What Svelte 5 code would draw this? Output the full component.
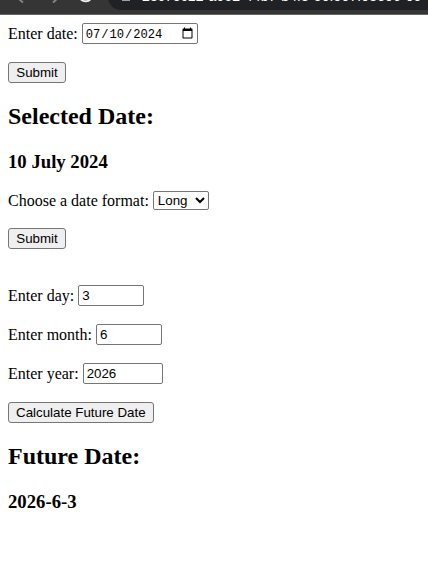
<script>
  let date = $state('2024-07-10');
  let format = $state('Long');
  let day = $state(3);
  let month = $state(6);
  let year = $state(2026);
</script>

<div class="toolbar">
  <svg class="nav" width="104" height="14" viewBox="0 0 104 14" fill="none" stroke-width="1.8">
    <path d="M26-3L19-1L23 2.5M52-3L57-1L53 2.5" stroke="#858789" />
    <path d="M80-2A6 5 0 0 0 91-1.5" stroke="#f1f1f1" stroke-width="2" />
  </svg>
  <div class="address">
    <svg width="10" height="4" viewBox="0 0 10 4"><path d="M1 0H9V1H1Z" fill="#9aa0a6" /></svg>
    <span>28c7ec12-a662-44b7-b4f8-50f507f08e06-00</span>
  </div>
</div>

<main>
  <form onsubmit={(e) => e.preventDefault()}>
    <div class="row date-row"><label for="date">Enter date:</label><input id="date" type="date" bind:value={date} /></div>
    <button>Submit</button>
  </form>
  <h2>Selected Date:</h2>
  <h3>10 July 2024</h3>
  <form class="format" onsubmit={(e) => e.preventDefault()}>
    <div class="row"><label for="format">Choose a date format:</label><select id="format" bind:value={format}><option>Long</option></select></div>
    <button>Submit</button>
  </form>
  <form class="future" onsubmit={(e) => e.preventDefault()}>
    <div class="row"><label for="day">Enter day:</label><input id="day" type="number" bind:value={day} /></div>
    <div class="row"><label for="month">Enter month:</label><input id="month" type="number" bind:value={month} /></div>
    <div class="row"><label for="year">Enter year:</label><input id="year" class="year" type="number" bind:value={year} /></div>
    <button>Calculate Future Date</button>
  </form>
  <h2>Future Date:</h2>
  <h3>2026-6-3</h3>
</main>

<style>
  :global(body) { margin: 0; background: #fff; overflow: hidden; }
  .toolbar {
    display: flex; height: 14px; overflow: hidden;
    background: #353535; border-bottom: 1px solid #656565;
  }
  .nav { flex: none; }
  .address {
    display: flex; flex: none; width: 400px; height: 26px; margin-top: -16px;
    margin-left: 4px; padding: 16px 0 0 13px; box-sizing: border-box;
    background: #202124; border-radius: 13px;
  }
  .address span {
    margin: -11px 0 0 11px; color: #fff; white-space: nowrap;
    font: 14px/14px "Liberation Sans", Arial, sans-serif;
    letter-spacing: .12px;
  }
  main {
    height: 553px; padding: 8px 8px 0; box-sizing: border-box; color: #000;
    font: 16px/18px "Liberation Serif", "Times New Roman", serif;
  }
  form { display: flex; flex-direction: column; align-items: flex-start; gap: 18px; }
  .row { display: flex; align-items: center; gap: 4px; height: 21px; white-space: nowrap; }
  label { flex: none; }
  input, select, button {
    box-sizing: border-box; margin: 0; color: #000;
    font: 13.333px "Liberation Sans", Arial, sans-serif;
  }
  input { width: 66px; height: 21px; border: 1px solid #767676; border-radius: 2px; padding: 1px 3px; }
  input[type="date"] { width: 116px; padding: 0 1px 0 2px; font: 12.1px "Liberation Mono", monospace; }
  input[type="date"]::-webkit-datetime-edit { padding-top: 2px; }
  input[type="date"]::-webkit-calendar-picker-indicator { width: 13px; height: 13px; }
  input.year { width: 80px; }
  select { width: 56px; height: 19px; border: 1px solid #767676; border-radius: 2px; background: #fff; padding: 0; }
  button { height: 21px; min-width: 58px; padding: 0 7px; border: 1px solid #767676; border-radius: 3px; background: #efefef; }
  h2 { margin: 20px 0; font-size: 24px; line-height: 27px; }
  h3 { margin: 0; padding-top: 1px; font-size: 18.72px; line-height: 22px; }
  .format { margin-top: 17px; }
  .format button { margin-top: -1px; }
  .future { margin-top: 36px; }
</style>
